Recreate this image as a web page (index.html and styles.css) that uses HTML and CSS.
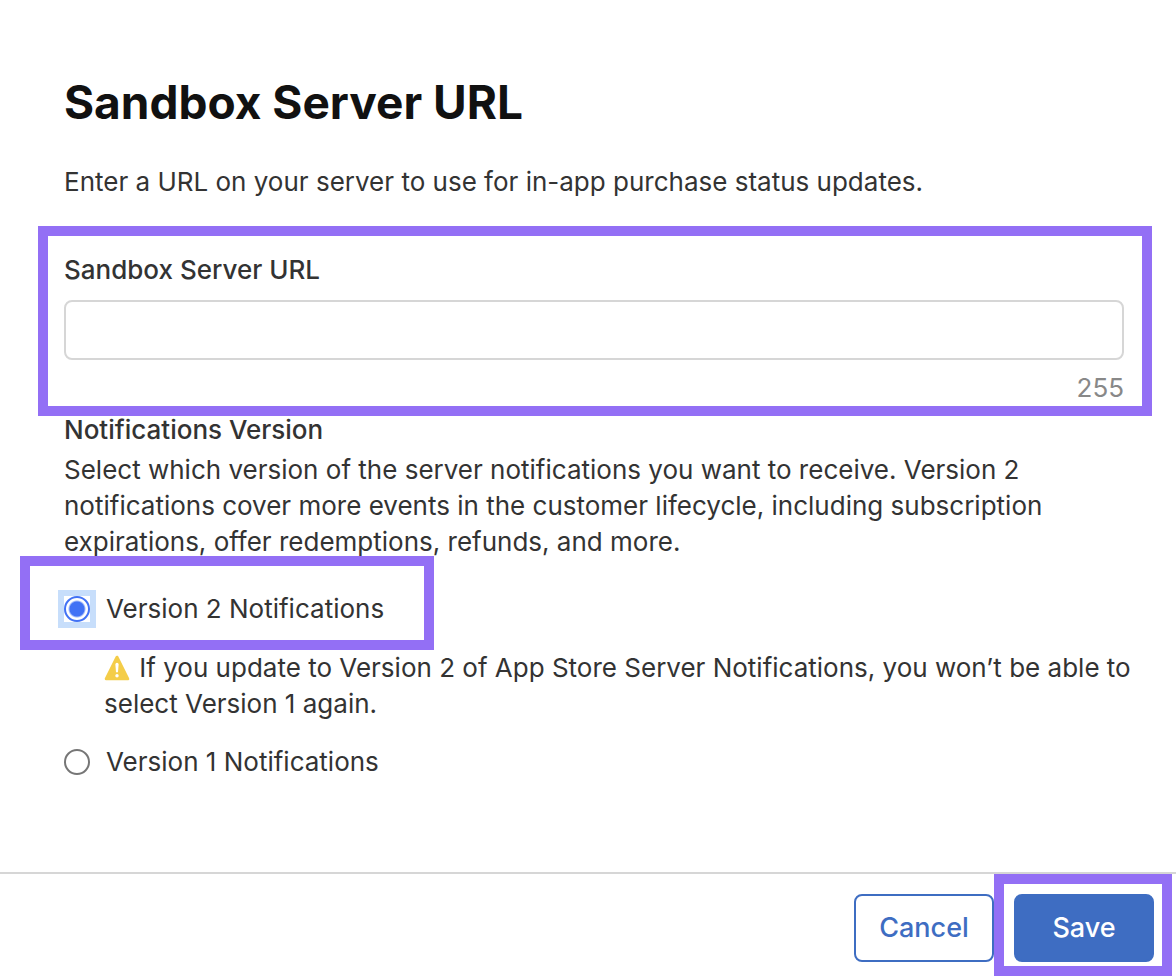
FILE: index.html
```html
<!DOCTYPE html>
<html lang="en">
<head>
  <meta charset="UTF-8" />
  <meta name="viewport" content="width=device-width, initial-scale=1.0" />
  <title>Sandbox Server URL</title>
  <link rel="stylesheet" href="styles.css">
</head>

<body>
  <form class="dialog">
    <main class="content">
      <h1>Sandbox Server URL</h1>
      <p class="intro">Enter a URL on your server to use for in-app purchase status updates.</p>

      <div class="field highlight">
        <label for="serverUrl">Sandbox Server URL</label>
        <input type="text" id="serverUrl" maxlength="255" />
        <span class="counter">255</span>
      </div>

      <fieldset class="versions">
        <legend>Notifications Version</legend>
        <p class="help">Select which version of the server notifications you want to receive. Version 2 notifications cover more events in the customer lifecycle, including subscription expirations, offer redemptions, refunds, and more.</p>

        <div class="option highlight">
          <input type="radio" name="version" id="version2" checked />
          <label for="version2">Version 2 Notifications</label>
        </div>
        <p class="warning">
          <svg class="warning-icon" viewBox="0 0 26 26" aria-hidden="true">
            <path d="M13 2.2 23.8 23.8H2.2z" fill="#f4cd49" stroke="#f4cd49" stroke-width="3" stroke-linejoin="round" />
            <path d="M11.4 9.4a1.6 1.6 0 0 1 3.2 0L14 17.2h-2z" fill="#fff" />
            <circle cx="13" cy="20.7" r="1.7" fill="#fff" />
          </svg>
          If you update to Version 2 of App Store Server Notifications, you won’t be able to select Version 1 again.
        </p>
        <div class="option">
          <input type="radio" name="version" id="version1" />
          <label for="version1">Version 1 Notifications</label>
        </div>
      </fieldset>
    </main>

    <footer class="actions">
      <button type="button" class="btn cancel">Cancel</button>
      <div class="save-box highlight">
        <button type="submit" class="btn save">Save</button>
      </div>
    </footer>
  </form>
</body>
</html>
```
FILE: styles.css
```css
*,
*::before {
  box-sizing: border-box;
}

body {
  margin: 0;
  background: #fff;
  color: #333;
  font-family: Inter, "Liberation Sans", sans-serif;
  font-size: 26px;
  line-height: 36px;
}

.dialog {
  display: flex;
  flex-direction: column;
  min-height: 100vh;
}

.content {
  flex: 1;
  padding: 72px 24px 0 20px;
}

h1 {
  margin: 0 44px;
  color: #111;
  font-size: 46px;
  line-height: 60px;
  font-weight: 700;
}

.intro {
  margin: 32px 44px 26px;
}

.highlight {
  border: 10px solid #936ff5;
}

.field {
  display: flex;
  flex-direction: column;
  margin-left: 18px;
  padding: 16px 18px 0 16px;
}

.field label,
legend {
  font-weight: 500;
}

.field input {
  width: 100%;
  height: 60px;
  margin: 12px 0 10px;
  padding: 0 16px;
  border: 2px solid #d6d6d6;
  border-radius: 8px;
  font: inherit;
}

.counter {
  align-self: flex-end;
  color: #888;
}

.versions {
  margin: 0;
  padding: 0;
  border: 0;
}

legend {
  margin-left: 44px;
  padding: 0;
  line-height: 28px;
}

.help {
  margin: 8px 44px -4px;
}

.option {
  display: flex;
  align-items: center;
  gap: 16px;
  padding: 0 44px;
}

.option.highlight {
  width: 414px;
  height: 94px;
  padding: 12px 34px 0;
}

.option input {
  appearance: none;
  flex-shrink: 0;
  width: 26px;
  height: 26px;
  margin: 0;
}

.option input::before {
  content: "";
  display: block;
  width: 26px;
  height: 26px;
  border: 2px solid #767676;
  border-radius: 50%;
}

.option input:checked {
  outline: 6px solid #c7defb;
}

.option input:checked::before {
  border-color: #4272f5;
  background: radial-gradient(circle, #4272f5 7px, #fff 9px);
}

.warning {
  margin: 0 16px 22px 84px;
}

.warning-icon {
  width: 26px;
  height: 26px;
  margin-right: 2px;
  vertical-align: -4px;
}

.actions {
  display: flex;
  justify-content: flex-end;
  align-items: flex-start;
  padding: 0 4px 4px 0;
  border-top: 2px solid #d6d6d6;
}

.btn {
  width: 140px;
  height: 68px;
  border: 2px solid #3e6dc2;
  border-radius: 8px;
  font: inherit;
  font-size: 27px;
  font-weight: 500;
  cursor: pointer;
}

.cancel {
  margin-top: 20px;
  background: #fff;
  color: #3e6dc2;
}

.save {
  background: #3e6dc2;
  color: #fff;
}

.save-box {
  display: flex;
  padding: 10px 8px 4px 10px;
}
```
